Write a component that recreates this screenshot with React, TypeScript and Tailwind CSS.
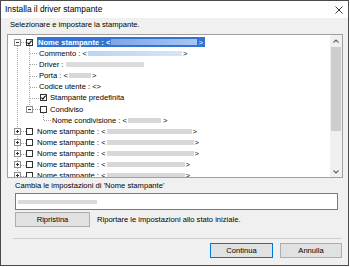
import type { ReactNode } from 'react'

function Expander({ open }: { open: boolean }) {
  return (
    <span className="relative flex h-[7px] w-[7px] shrink-0 items-center justify-center border border-[#8e8e8e] bg-white">
      <span className="absolute h-px w-[3px] bg-[#333]" />
      {!open && <span className="absolute h-[3px] w-px bg-[#333]" />}
    </span>
  )
}

function Check({ checked }: { checked: boolean }) {
  return (
    <span className="flex h-[7px] w-[7px] shrink-0 items-center justify-center border border-[#333] bg-white">
      {checked && (
        <svg width="5" height="5" viewBox="0 0 5 5">
          <path d="M0.4 2.6 L1.9 4 L4.6 0.6" fill="none" stroke="#111" strokeWidth="1.2" />
        </svg>
      )}
    </span>
  )
}

function Bar({ w, color = 'bg-[#d8d8d8]' }: { w: string; color?: string }) {
  return <span className={`ml-[1px] h-[5px] shrink-0 ${w} ${color}`} />
}

function Row({ children, pad }: { children: ReactNode; pad: string }) {
  return <div className={`flex h-[11.17px] items-center whitespace-nowrap ${pad}`}>{children}</div>
}

function Stampante({ bar }: { bar: string }) {
  return (
    <Row pad="pl-[6px]">
      <Expander open={false} />
      <span className="w-[5px]" />
      <Check checked={false} />
      <span className="ml-[4px]">Nome stampante : &lt;</span>
      <Bar w={bar} />
      <span className="ml-[1px]">&gt;</span>
    </Row>
  )
}

// linee tratteggiate dell'albero (coordinate relative all'area del tree)
function TreeLines() {
  const c = (i: number) => 7.085 + 11.17 * i
  const dash = { stroke: '#a3a3a3', strokeWidth: 1, strokeDasharray: '1 1' }
  return (
    <svg className="pointer-events-none absolute inset-0" width="322" height="142">
      <line x1="9.5" y1={c(0)} x2="9.5" y2="142" {...dash} />
      {[0, 8, 9, 10, 11, 12].map((i) => (
        <line key={i} x1="13" y1={Math.round(c(i)) + 0.5} x2="18" y2={Math.round(c(i)) + 0.5} {...dash} />
      ))}
      <line x1="21.5" y1={c(0) + 4} x2="21.5" y2={c(6)} {...dash} />
      {[1, 2, 3, 4].map((i) => (
        <line key={i} x1="22" y1={Math.round(c(i)) + 0.5} x2="30" y2={Math.round(c(i)) + 0.5} {...dash} />
      ))}
      <line x1="22" y1={Math.round(c(5)) + 0.5} x2="32" y2={Math.round(c(5)) + 0.5} {...dash} />
      <line x1="25" y1={Math.round(c(6)) + 0.5} x2="32" y2={Math.round(c(6)) + 0.5} {...dash} />
      <line x1="35.5" y1={c(6) + 4} x2="35.5" y2={c(7)} {...dash} />
      <line x1="36" y1={Math.round(c(7)) + 0.5} x2="43" y2={Math.round(c(7)) + 0.5} {...dash} />
    </svg>
  )
}

export default function App() {
  return (
    <div className="flex h-[266px] w-[349px] flex-col border border-[#4a4a4a] bg-[#f0f0f0] font-['Liberation_Sans',Arial,sans-serif] text-[7.6px] text-black">
      <div className="flex h-[17px] shrink-0 items-center justify-between bg-white pl-[4px] pr-[5px]">
        <span className="text-[8.4px]">Installa il driver stampante</span>
        <svg width="8" height="8" viewBox="0 0 8 8">
          <path d="M0.5 0.5 L7.5 7.5 M7.5 0.5 L0.5 7.5" stroke="#222" strokeWidth="0.9" />
        </svg>
      </div>

      <div className="flex flex-1 flex-col">
        <div className="ml-[9px] flex h-[14px] items-center">Selezionare e impostare la stampante.</div>

        <div className="ml-[6px] mt-[2px] flex h-[144px] w-[336px] border border-[#a0a0a0] bg-white">
          <div className="relative flex-1 overflow-hidden pt-[1.5px] leading-[11px]">
            <TreeLines />
            <Row pad="pl-[6px]">
              <Expander open />
              <span className="w-[5px]" />
              <Check checked />
              <span className="ml-[4px] flex h-[10px] items-center bg-[#3373d4] pl-[1px] pr-[2px] font-bold text-white">
                Nome stampante : &lt;
                <span className="ml-[1px] h-[6px] w-[86px] bg-gradient-to-r from-[#7ea6e6] to-[#a9c5f0]" />
                <span className="ml-[1px] font-normal">&gt;</span>
              </span>
            </Row>
            <Row pad="pl-[31px]">
              Commento : &lt;
              <Bar w="w-[94px]" color="bg-gradient-to-r from-[#bcd3f2] to-[#d7e5f8]" />
              <span className="ml-[1px]">&gt;</span>
            </Row>
            <Row pad="pl-[31px]">
              Driver :
              <span className="ml-[3px] h-[5px] w-[78px] bg-[#dcdcdc]" />
            </Row>
            <Row pad="pl-[31px]">
              Porta : &lt;
              <Bar w="w-[22px]" />
              <span className="ml-[1px]">&gt;</span>
            </Row>
            <Row pad="pl-[31px]">Codice utente : &lt;&gt;</Row>
            <Row pad="pl-[32px]">
              <Check checked />
              <span className="ml-[3px]">Stampante predefinita</span>
            </Row>
            <Row pad="pl-[18px]">
              <Expander open />
              <span className="w-[7px]" />
              <Check checked={false} />
              <span className="ml-[3px]">Condiviso</span>
            </Row>
            <Row pad="pl-[44px]">
              Nome condivisione : &lt;
              <Bar w="w-[33px]" />
              <span className="ml-[2px]">&gt;</span>
            </Row>
            <Stampante bar="w-[85px]" />
            <Stampante bar="w-[87px]" />
            <Stampante bar="w-[87px]" />
            <Stampante bar="w-[78px]" />
            <Stampante bar="w-[78px]" />
          </div>

          <div className="flex w-[12px] shrink-0 flex-col bg-[#f0f0f0]">
            <div className="flex h-[12px] items-center justify-center">
              <svg width="6" height="4" viewBox="0 0 6 4">
                <path d="M0.5 3.5 L3 1 L5.5 3.5" fill="none" stroke="#606060" strokeWidth="1.1" />
              </svg>
            </div>
            <div className="mx-[1px] h-[84px] bg-[#cdcdcd]" />
            <div className="flex-1" />
            <div className="flex h-[11px] items-center justify-center">
              <svg width="6" height="4" viewBox="0 0 6 4">
                <path d="M0.5 0.5 L3 3 L5.5 0.5" fill="none" stroke="#606060" strokeWidth="1.1" />
              </svg>
            </div>
          </div>
        </div>

        <div className="mt-[2px] flex flex-col pl-[14px]">
          <div className="flex h-[12px] items-center">Cambia le impostazioni di 'Nome stampante'</div>
          <div className="mt-[1px] flex h-[17px] w-[323px] items-center border border-[#7a7a7a] bg-white">
            <span className="ml-[2px] h-[4px] w-[79px] bg-[#dadada]" />
          </div>
          <div className="mt-[2px] flex items-center">
            <div className="flex h-[15px] w-[75px] items-center justify-center border border-[#adadad] bg-[#e1e1e1]">
              Ripristina
            </div>
            <span className="ml-[7px]">Riportare le impostazioni allo stato iniziale.</span>
          </div>
        </div>

        <div className="ml-[12px] mt-[11px] h-px w-[329px] bg-[#cfcfcf]" />

        <div className="mt-[4px] flex justify-end gap-[7px] pr-[6px]">
          <div className="flex h-[15px] w-[63px] items-center justify-center border border-[#0078d7] bg-[#e1e1e1]">
            Continua
          </div>
          <div className="flex h-[15px] w-[62px] items-center justify-center border border-[#adadad] bg-[#e1e1e1]">
            Annulla
          </div>
        </div>
      </div>
    </div>
  )
}
